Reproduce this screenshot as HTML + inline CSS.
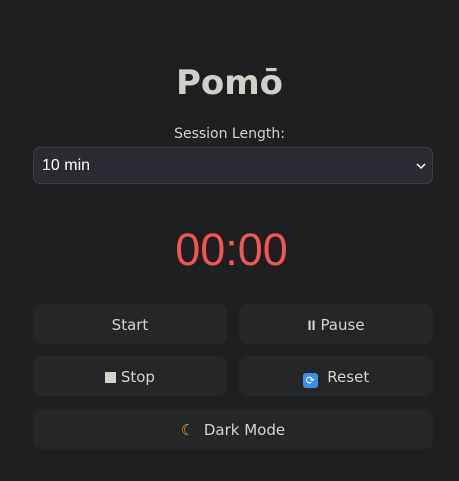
<!DOCTYPE html>
<html><head><style>
body{margin:0;width:459px;height:481px;background:#1e1f21;font-family:"DejaVu Sans","Liberation Sans",sans-serif;color:#d6d2cc;position:relative;overflow:hidden}
.a{position:absolute}
h1{position:absolute;left:0;width:459px;top:59px;margin:0;text-align:center;font-size:34px;font-weight:bold;color:#d3cec8;line-height:48px}
.lbl{left:0;width:459px;top:124px;text-align:center;font-size:14px;line-height:20px;color:#d6d2cc}
.sel{left:33px;top:147px;width:400px;height:37px;border:1px solid #3d3e44;border-radius:7px;background:#2a2a33;box-sizing:border-box;font-family:"Liberation Sans",sans-serif;font-size:16px;color:#fff;line-height:35px;padding-left:8px}
.sel svg{position:absolute;right:6px;top:14px}
.t{left:0;width:459px;top:222px;text-align:center;font-family:"Liberation Sans",sans-serif;font-size:45px;color:#f25555;line-height:56px;padding-left:4px;box-sizing:border-box}
.b{background:#252628;border-radius:8px;height:40px;line-height:43px;text-align:center;font-size:15px;color:#d6d2cc}
</style></head><body>
<h1>Pomō</h1>
<div class="a lbl">Session Length:</div>
<div class="a sel">10 min<svg width="10" height="8" viewBox="0 0 10 8"><path d="M1 2l4 4 4-4" stroke="#fff" stroke-width="1.5" fill="none"/></svg></div>
<div class="a t">00:00</div>
<div class="a b" style="left:33px;top:304px;width:194px">Start</div>
<div class="a b" style="left:239px;top:304px;width:194px"><span style="font-size:12px;font-weight:bold">ll</span> Pause</div>
<div class="a b" style="left:33px;top:356px;width:194px"><span style="display:inline-block;width:11px;height:11px;background:#d6d2cc;vertical-align:-1px"></span> Stop</div>
<div class="a b" style="left:239px;top:356px;width:194px"><span style="display:inline-block;width:15px;height:15px;background:#3b8fe8;border-radius:3px;vertical-align:-2px;color:#fff;font-size:11px;line-height:15px">⟳</span>&nbsp; Reset</div>
<div class="a b" style="left:33px;top:409px;width:400px"><span style="color:#f0a63a;font-weight:bold">☾</span>&nbsp; Dark Mode</div>
</body></html>
